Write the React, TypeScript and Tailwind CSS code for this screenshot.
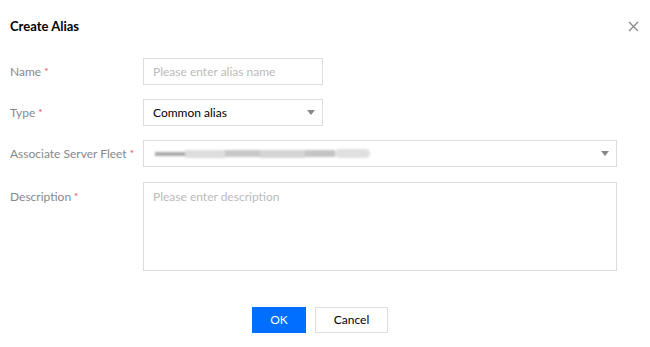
import React from 'react';

const font = { fontFamily: 'Lato, "Noto Sans", sans-serif' };

const Caret = () => (
  <svg width="8" height="5" viewBox="0 0 8 5" className="shrink-0">
    <path d="M0 0 L8 0 L4 5 Z" fill="#888" />
  </svg>
);

const Label = ({ text, top }: { text: string; top?: boolean }) => (
  <div className={`w-[133px] shrink-0 text-[12px] text-[#888] ${top ? 'pt-[6px]' : ''}`}>
    {text}
    <span className="text-[#e54545] text-[10px] ml-[3px] relative -top-[1px]">*</span>
  </div>
);

export default function App() {
  return (
    <div className="w-[650px] h-[347px] bg-white flex flex-col" style={font}>
      <div className="flex items-center justify-between pl-[10px] pr-[11px] pt-[18px] h-[35px]">
        <h2 className="text-[13px] font-bold text-black">Create Alias</h2>
        <svg width="11" height="11" viewBox="0 0 11 11">
          <path d="M1 1 L10 10 M10 1 L1 10" stroke="#888" strokeWidth="1.3" />
        </svg>
      </div>

      <div className="flex flex-col gap-[14px] pl-[10px] pt-[23px]">
        <div className="flex items-center">
          <Label text="Name" />
          <div className="w-[180px] h-[27px] border border-[#ddd] flex items-center px-[9px] text-[12px] text-[#bbb]">
            Please enter alias name
          </div>
        </div>

        <div className="flex items-center">
          <Label text="Type" />
          <div className="w-[180px] h-[27px] border border-[#ddd] flex items-center justify-between pl-[9px] pr-[7px] text-[12px] text-black">
            <span>Common alias</span>
            <Caret />
          </div>
        </div>

        <div className="flex items-center">
          <Label text="Associate Server Fleet" />
          <div className="w-[474px] h-[27px] border border-[#ddd] flex items-center justify-between pl-[11px] pr-[7px]">
            <div className="flex items-center h-[10px] blur-[1px]">
              <div className="w-[30px] h-[4px] bg-[#aaa]" />
              <div className="w-[40px] h-[8px] bg-[#ddd]" />
              <div className="w-[35px] h-[7px] bg-[#c8c8c8]" />
              <div className="w-[45px] h-[8px] bg-[#d4d4d4]" />
              <div className="w-[30px] h-[7px] bg-[#c4c4c4]" />
              <div className="w-[35px] h-[9px] bg-[#e0e0e0] rounded-full" />
            </div>
            <Caret />
          </div>
        </div>

        <div className="flex items-start pt-[1px]">
          <Label text="Description" top />
          <div className="w-[474px] h-[89px] border border-[#ddd] px-[9px] pt-[5px] text-[12px] text-[#bbb]">
            Please enter description
          </div>
        </div>
      </div>

      <div className="flex justify-center gap-[9px] pr-[10px] pt-[36px]">
        <button className="w-[54px] h-[26px] bg-[#006eff] text-white text-[12px]">OK</button>
        <button className="w-[73px] h-[26px] border border-[#ddd] text-[12px] text-black">Cancel</button>
      </div>
    </div>
  );
}
